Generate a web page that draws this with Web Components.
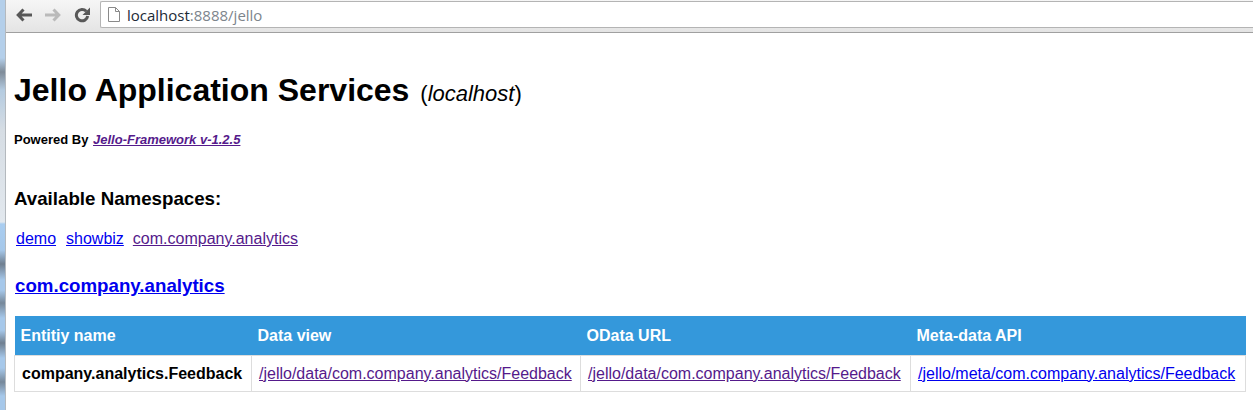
<!DOCTYPE html>
<html>
<head>
<meta charset="utf-8">
<title>Jello</title>
<style>
  html, body { margin: 0; height: 100%; overflow: hidden; background: #fff; }
  body { display: flex; font-family: "Liberation Sans", Arial, sans-serif; color: #000; }
</style>
</head>
<body>
<window-edge></window-edge>
<browser-window>
  <browser-toolbar url-host="localhost" url-rest=":8888/jello"></browser-toolbar>
  <jello-page></jello-page>
</browser-window>

<script>
class WindowEdge extends HTMLElement {
  constructor(){
    super();
    this.attachShadow({mode:"open"});
    this.shadowRoot.innerHTML = `
    <style>
      :host{
        display:block;
        flex:none;
        width:6px;
        box-sizing:border-box;
        border-right:1px solid #b4b9be;
        background:linear-gradient(#b4cfea 0, #b4cfea 58px, #7f8c99 72px, #b4cbe0 90px, #d6dde4 130px, #e2e8ee 222px, #a9cdf0 224px, #a6c8ea 250px, #6f7f90 264px, #a6c8ea 280px, #a6c8ea 290px, #76889a 303px, #a6c8ea 318px, #a6c8ea 330px, #6f7f90 343px, #a6c8ea 358px, #a6c8ea 368px, #76889a 382px, #a6c8ea 396px, #a6c8ea 410px);
      }
    </style>`;
  }
}

class BrowserToolbar extends HTMLElement {
  constructor(){
    super();
    this.attachShadow({mode:"open"});
  }
  connectedCallback(){
    const host = this.getAttribute('url-host');
    const rest = this.getAttribute('url-rest');
    this.shadowRoot.innerHTML = `
    <style>
      :host{
        display:flex;
        align-items:flex-start;
        height:33px;
        box-sizing:border-box;
        border-bottom:1px solid #a0a0a0;
        background:linear-gradient(#f6f6f6,#e4e4e4);
        padding:1px 0 0 10px;
        gap:10px;
      }
      svg{display:block;flex:none;}
      .icons{display:flex;align-items:center;gap:13px;height:27px;}
      .omni{
        flex:1;
        display:flex;
        align-items:center;
        gap:7px;
        height:27px;
        box-sizing:border-box;
        padding-left:7px;
        background:#fff;
        border:1px solid #b4b4b4;
        border-right:0;
        border-radius:2px 0 0 2px;
        font:15px "Open Sans","Liberation Sans",sans-serif;
        color:#7d858c;
      }
      .omni b{font-weight:400;color:#1c2a36;}
    </style>
    <div class="icons">
      <svg width="16" height="14" viewBox="0 0 16 14"><path d="M7.500 1.500 2.200 7l5.300 5.500M3 7h13" fill="none" stroke="#585858" stroke-width="3"/></svg>
      <svg width="16" height="14" viewBox="0 0 16 14"><path d="M8.500 1.500 13.800 7l-5.300 5.500M13 7H0" fill="none" stroke="#bababa" stroke-width="3"/></svg>
      <svg width="16" height="16" viewBox="0 0 16 16"><path d="M12.300 4.300A5.700 5.700 0 1 0 13.700 9" fill="none" stroke="#585858" stroke-width="3"/><path d="M16 .5V8H8.500z" fill="#585858"/></svg>
    </div>
    <div class="omni">
      <svg width="12" height="15" viewBox="0 0 12 15"><path d="M.5.500H7.500L11.500 4.500V14.500H.5zM7.500.5V4.500H11.500" fill="#fff" stroke="#8a8a8a"/></svg>
      <span><b>${host}</b>${rest}</span>
    </div>`;
  }
}

class NsTable extends HTMLElement {
  constructor(){
    super();
    this.attachShadow({mode:"open"});
    this.shadowRoot.innerHTML = `
    <style>
      :host{display:block;}
      table{width:100%;table-layout:fixed;border-collapse:collapse;font-size:16px;}
      th{
        background:#3498db;
        color:#fff;
        text-align:left;
        font-weight:bold;
        padding:0 7px 0 6px;
        height:39px;
      }
      td{padding:0 7px;height:35px;border:1px solid #ddd;white-space:nowrap;}
      td.name{font-weight:bold;}
      a{color:#0000ee;}
      a.seen{color:#551a8b;}
    </style>
    <table>
      <colgroup><col style="width:237px"><col style="width:329px"><col style="width:330px"><col></colgroup>
      <tr><th>Entitiy name</th><th>Data view</th><th>OData URL</th><th>Meta-data API</th></tr>
      <tr>
        <td class="name">company.analytics.Feedback</td>
        <td><a class="seen" href="#">/jello/data/com.company.analytics/Feedback</a></td>
        <td><a class="seen" href="#">/jello/data/com.company.analytics/Feedback</a></td>
        <td><a href="#">/jello/meta/com.company.analytics/Feedback</a></td>
      </tr>
    </table>`;
  }
}
customElements.define('ns-table', NsTable);

class JelloPage extends HTMLElement {
  constructor(){
    super();
    this.attachShadow({mode:"open"});
    this.shadowRoot.innerHTML = `
    <style>
      :host{display:block;padding:0 7px 0 8px;}
      a{color:#0000ee;}
      a.seen{color:#551a8b;}
      h1{margin:39px 0 0;font-size:32px;line-height:37px;font-weight:bold;}
      h1 span{font-size:22px;font-weight:normal;margin-left:2px;}
      .powered{margin:20px 0 0;font-size:13px;line-height:15px;font-weight:bold;}
      .powered a{margin-left:1px;}
      h3{margin:41px 0 0;font-size:18.720px;line-height:22px;font-weight:bold;}
      .spaces{display:flex;gap:10px;margin:19px 0 0 2px;font-size:16px;line-height:19px;}
      .spaces a.seen{margin-left:-1px;}
      h2{margin:27px 0 0 1px;font-size:18.720px;line-height:22px;font-weight:bold;}
      ns-table{margin-top:19px;}
    </style>
    <h1>Jello Application Services <span>(<i>localhost</i>)</span></h1>
    <p class="powered">Powered By <a class="seen" href="#"><i>Jello-Framework v-1.2.5</i></a></p>
    <h3>Available Namespaces:</h3>
    <div class="spaces">
      <a href="#">demo</a>
      <a href="#">showbiz</a>
      <a class="seen" href="#">com.company.analytics</a>
    </div>
    <h2><a href="#">com.company.analytics</a></h2>
    <ns-table></ns-table>`;
  }
}

class BrowserWindow extends HTMLElement {
  constructor(){
    super();
    this.attachShadow({mode:"open"});
    this.shadowRoot.innerHTML = `
    <style>
      :host{display:block;flex:1;min-width:0;}
    </style>
    <slot></slot>`;
  }
}

customElements.define('window-edge', WindowEdge);
customElements.define('browser-toolbar', BrowserToolbar);
customElements.define('jello-page', JelloPage);
customElements.define('browser-window', BrowserWindow);
</script>
</body>
</html>
